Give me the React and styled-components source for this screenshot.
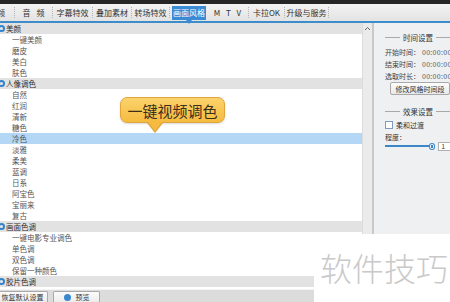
import React from "react";
import styled, { createGlobalStyle } from "styled-components";

const GlobalStyle = createGlobalStyle`
  html, body {
    margin: 0;
    padding: 0;
    background: #fff;
  }
  body {
    font-family: "Noto Sans CJK SC", "Noto Sans", sans-serif;
  }
`;

const Screen = styled.div`
  position: relative;
  width: 450px;
  height: 302px;
  overflow: hidden;
  display: flex;
  flex-direction: column;
  background: #fff;
`;

const TopStrip = styled.div`
  height: 4px;
  flex-shrink: 0;
  background: #262626;
`;

const TabBar = styled.div`
  height: 17px;
  flex-shrink: 0;
  display: flex;
  align-items: center;
  background: linear-gradient(#f3f3f3, #e3e3e3);
  border-bottom: 2px solid #3f8ccb;
`;

const Tab = styled.div`
  position: relative;
  flex-shrink: 0;
  box-sizing: border-box;
  width: ${(p) => p.$w}px;
  height: ${(p) => (p.$active ? 14 : 11)}px;
  margin: ${(p) => (p.$active ? "0 1px 0 2px" : "0")};
  padding-right: ${(p) => (p.$cut ? 9 : 0)}px;
  display: flex;
  align-items: center;
  justify-content: ${(p) => (p.$cut ? "flex-end" : "center")};
  overflow: ${(p) => (p.$cut ? "hidden" : "visible")};
  white-space: nowrap;
  word-spacing: 4px;
  font-size: 8px;
  color: ${(p) => (p.$active ? "#fff" : "#333")};
  background: ${(p) => (p.$active ? "#3b8ad4" : "transparent")};
  border-right: ${(p) => (p.$active ? "none" : "1px dotted #b3b3b3")};

  &:after {
    content: "";
    display: ${(p) => (p.$active ? "block" : "none")};
    position: absolute;
    left: 50%;
    bottom: -4px;
    margin-left: -3px;
    border-top: 4px solid #3b8ad4;
    border-left: 3px solid transparent;
    border-right: 3px solid transparent;
  }
`;

const Main = styled.div`
  height: 266px;
  flex-shrink: 0;
  display: flex;
`;

const List = styled.div`
  width: 362px;
  flex-shrink: 0;
  display: flex;
  flex-direction: column;
  overflow: hidden;
  background: #fff;
`;

const Row = styled.div`
  height: 11px;
  flex-shrink: 0;
  display: flex;
  align-items: center;
  gap: 1px;
  padding-left: ${(p) => (p.$group ? 0 : 12)}px;
  font-size: 7.5px;
  white-space: nowrap;
  color: ${(p) => (p.$group ? "#2e2e2e" : "#555")};
  background: ${(p) =>
    p.$group ? "#e2e2e2" : p.$selected ? "#b4d7f6" : "transparent"};
`;

const GroupIcon = styled.svg`
  width: 7px;
  height: 7px;
  margin-left: -2px;
  flex-shrink: 0;
`;

const ScrollBar = styled.div`
  width: 9px;
  flex-shrink: 0;
  display: flex;
  justify-content: center;
  padding-top: 3px;
  background: #ebebeb;
  border-left: 1px solid #dcdcdc;
  border-right: 2px solid #c9c9c9;
`;

const Panel = styled.div`
  width: 77px;
  flex-shrink: 0;
  box-sizing: border-box;
  padding: 9px 0 0 11px;
  display: flex;
  flex-direction: column;
  overflow: hidden;
  background: #eef0f2;
  font-size: 7px;
  color: #444;
`;

const SectionTitle = styled.div`
  width: 66px;
  height: 10px;
  margin-top: ${(p) => p.$mt || 0}px;
  display: flex;
  align-items: center;
  gap: 3px;
  font-size: 7.5px;
  color: #333;
  white-space: nowrap;

  &:before,
  &:after {
    content: "";
    flex: 1;
    height: 1px;
    background: #a9a9a9;
  }
`;

const TimeRow = styled.div`
  height: 12px;
  margin-top: ${(p) => p.$mt || 0}px;
  display: flex;
  align-items: center;
  white-space: nowrap;
`;

const Value = styled.span`
  margin-left: 2px;
  letter-spacing: 0.3px;
  color: #555;
`;

const PanelButton = styled.div`
  width: 60px;
  height: 13px;
  margin-left: 5px;
  box-sizing: border-box;
  display: flex;
  align-items: center;
  justify-content: center;
  border: 1px solid #a8a8a8;
  border-radius: 2px;
  background: linear-gradient(#fdfdfd, #e9e9e9);
  white-space: nowrap;
  color: #333;
`;

const CheckRow = styled.div`
  height: 10px;
  margin-top: 4px;
  display: flex;
  align-items: center;
  gap: 3px;
  white-space: nowrap;
  color: #333;
`;

const CheckBox = styled.div`
  width: 8px;
  height: 8px;
  box-sizing: border-box;
  border: 1px solid #7d9dbf;
  background: #fff;
`;

const Label = styled.div`
  height: 10px;
  margin-top: 2px;
  display: flex;
  align-items: center;
  color: #333;
`;

const SliderRow = styled.div`
  height: 8px;
  display: flex;
  align-items: center;
`;

const Track = styled.div`
  width: 50px;
  height: 2px;
  background: #3b85c9;
`;

const Knob = styled.div`
  width: 7px;
  height: 7px;
  box-sizing: border-box;
  border: 1px solid #3b85c9;
  border-radius: 50%;
  background: radial-gradient(#3b85c9 0 1px, #fff 1.5px);
`;

const NumBox = styled.div`
  width: 14px;
  height: 9px;
  margin-left: 3px;
  box-sizing: border-box;
  padding-left: 2px;
  display: flex;
  align-items: center;
  border: 1px solid #b0b0b0;
  background: #fff;
  font-size: 7px;
`;

const BottomBar = styled.div`
  height: 13px;
  flex-shrink: 0;
  box-sizing: border-box;
  display: flex;
  align-items: flex-end;
  gap: 5px;
  background: #dcdcdc;
  border-top: 1px solid #f4f4f4;
`;

const BarButton = styled.div`
  width: ${(p) => p.$w}px;
  height: 11px;
  margin-left: ${(p) => p.$ml || 0}px;
  box-sizing: border-box;
  display: flex;
  align-items: center;
  justify-content: center;
  gap: 5px;
  border: 1px solid #a9a9a9;
  border-bottom: none;
  border-radius: 2px 2px 0 0;
  background: linear-gradient(#fbfbfb, #ececec);
  font-size: 7px;
  color: #333;
  white-space: nowrap;
`;

const Dot = styled.span`
  width: 7px;
  height: 7px;
  border-radius: 50%;
  background: #3a86cf;
`;

const Tooltip = styled.div`
  position: absolute;
  left: 120px;
  top: 97px;
  width: 105px;
  height: 26px;
  box-sizing: border-box;
  display: flex;
  align-items: center;
  justify-content: center;
  border: 1px solid #e0a53c;
  border-radius: 7px;
  background: linear-gradient(#fbd36c, #f5bb40);
  box-shadow: 0 1px 2px rgba(0, 0, 0, 0.15);
  font-size: 15px;
  color: #3b2f1c;
  white-space: nowrap;

  &:before {
    content: "";
    position: absolute;
    left: 26px;
    bottom: -11px;
    border-top: 10px solid #e0a53c;
    border-left: 8px solid transparent;
    border-right: 8px solid transparent;
  }

  &:after {
    content: "";
    position: absolute;
    left: 27px;
    bottom: -9px;
    border-top: 9px solid #f5bb40;
    border-left: 7px solid transparent;
    border-right: 7px solid transparent;
  }
`;

const Watermark = styled.div`
  position: absolute;
  left: 314px;
  top: 234px;
  right: 0;
  bottom: 0;
  box-sizing: border-box;
  padding: 17px 0 0 6px;
  background: #fff;
  font-size: 32px;
  line-height: 32px;
  font-weight: 300;
  color: #c9c9c9;
  white-space: nowrap;
`;

const tabs = [
  { label: "视 频", w: 15, cut: true },
  { label: "音 频", w: 38 },
  { label: "字幕特效", w: 40 },
  { label: "叠加素材", w: 39 },
  { label: "转场特效", w: 38 },
  { label: "画面风格", w: 34, active: true },
  { label: "M T V", w: 42 },
  { label: "卡拉OK", w: 36 },
  { label: "升级与服务", w: 44 },
];

const groups = [
  { title: "美颜", items: ["一键美颜", "磨皮", "美白", "肤色"] },
  {
    title: "人像调色",
    items: ["自然", "红润", "清新", "糖色", "冷色", "淡雅", "柔美", "蓝调", "日系", "阿宝色", "宝丽来", "复古"],
  },
  { title: "画面色调", items: ["一键电影专业调色", "单色调", "双色调", "保留一种颜色"] },
  { title: "胶片色调", items: [] },
];

const Expand = () => (
  <GroupIcon viewBox="0 0 7 7">
    <circle cx="3.5" cy="3.5" r="3.5" fill="#2f84cf" />
    <circle cx="3.5" cy="3.5" r="1.6" fill="#e2e2e2" />
  </GroupIcon>
);

export default function App() {
  return (
    <Screen>
      <GlobalStyle />
      <TopStrip />
      <TabBar>
        {tabs.map((t) => (
          <Tab key={t.label} $w={t.w} $active={t.active} $cut={t.cut}>
            {t.label}
          </Tab>
        ))}
      </TabBar>

      <Main>
        <List>
          {groups.map((g) => (
            <React.Fragment key={g.title}>
              <Row $group>
                <Expand />
                {g.title}
              </Row>
              {g.items.map((it) => (
                <Row key={it} $selected={it === "冷色"}>
                  {it}
                </Row>
              ))}
            </React.Fragment>
          ))}
        </List>

        <ScrollBar>
          <svg width="7" height="5" viewBox="0 0 7 5">
            <path d="M1 4 L3.5 1.5 L6 4" fill="none" stroke="#666" strokeWidth="1" />
          </svg>
        </ScrollBar>

        <Panel>
          <SectionTitle>时间设置</SectionTitle>
          <TimeRow $mt={4}>
            开始时间：<Value>00:00:00.0</Value>
          </TimeRow>
          <TimeRow>
            结束时间：<Value>00:00:00.0</Value>
          </TimeRow>
          <TimeRow>
            选取时长：<Value>00:00:00.0</Value>
          </TimeRow>
          <PanelButton>修改风格时间段</PanelButton>
          <SectionTitle $mt={11}>效果设置</SectionTitle>
          <CheckRow>
            <CheckBox />
            柔和过渡
          </CheckRow>
          <Label>程度：</Label>
          <SliderRow>
            <Track />
            <Knob />
            <NumBox>1</NumBox>
          </SliderRow>
        </Panel>
      </Main>

      <BottomBar>
        <BarButton $w={51} $ml={-3}>
          恢复默认设置
        </BarButton>
        <BarButton $w={47}>
          <Dot />
          预览
        </BarButton>
      </BottomBar>

      <Tooltip>一键视频调色</Tooltip>
      <Watermark>软件技巧</Watermark>
    </Screen>
  );
}
